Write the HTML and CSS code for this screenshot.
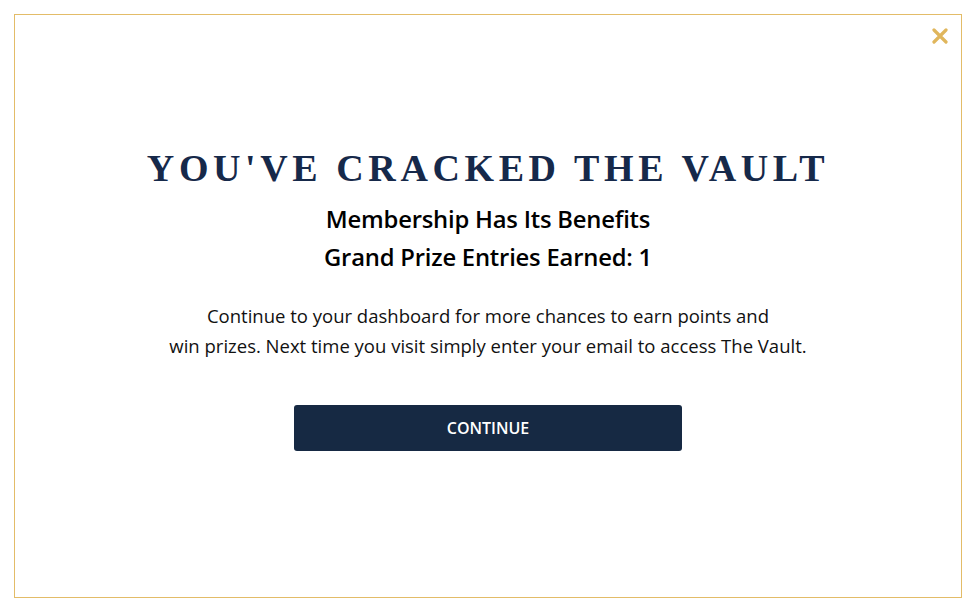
FILE: index.html
```html
<!DOCTYPE html>
<html lang="en">
<head>
    <meta charset="UTF-8">
    <title>The Vault</title>
    <link rel="stylesheet" href="styles.css">
</head>
<body>
    <div class="modal">
        <button class="close" aria-label="Close">
            <svg width="16" height="16" viewBox="0 0 16 16"><path d="M2 2L14 14M14 2L2 14" stroke="#e0b65c" stroke-width="3.2" stroke-linecap="round"/></svg>
        </button>
        <div class="content">
            <h1>YOU'VE CRACKED THE VAULT</h1>
            <h2>Membership Has Its Benefits</h2>
            <h2>Grand Prize Entries Earned: 1</h2>
            <p>Continue to your dashboard for more chances to earn points and<br>win prizes. Next time you visit simply enter your email to access The Vault.</p>
            <button class="continue">CONTINUE</button>
        </div>
    </div>
</body>
</html>
```

FILE: styles.css
```css
body {
    margin: 0;
    background: #fff;
    font-family: 'Open Sans', sans-serif;
}
.modal {
    position: relative;
    margin: 14px 13px 0 14px;
    height: 584px;
    border: 1px solid #e3bc68;
    box-sizing: border-box;
    display: flex;
    justify-content: center;
}
.close {
    position: absolute;
    top: 13px;
    right: 13px;
    background: none;
    border: none;
    padding: 0;
    cursor: pointer;
}
.close svg {
    display: block;
}
.content {
    display: flex;
    flex-direction: column;
    align-items: center;
    padding-top: 133px;
}
h1 {
    margin: 0;
    font-family: 'Liberation Serif', serif;
    font-weight: bold;
    font-size: 38px;
    letter-spacing: 4.6px;
    color: #16294a;
    line-height: 40px;
}
h2 {
    margin: 0;
    font-size: 23.8px;
    font-weight: 600;
    color: #000;
    line-height: 38px;
    letter-spacing: -0.2px;
}
h1 + h2 {
    margin-top: 12px;
}
p {
    margin: 25px 0 0;
    font-size: 18.5px;
    line-height: 30px;
    text-align: center;
    color: #111;
}
.continue {
    margin-top: 44px;
    width: 388px;
    height: 46px;
    background: #162943;
    color: #fff;
    border: none;
    border-radius: 3px;
    font-family: 'Open Sans', sans-serif;
    font-size: 16px;
    font-weight: 600;
    cursor: pointer;
}
```
